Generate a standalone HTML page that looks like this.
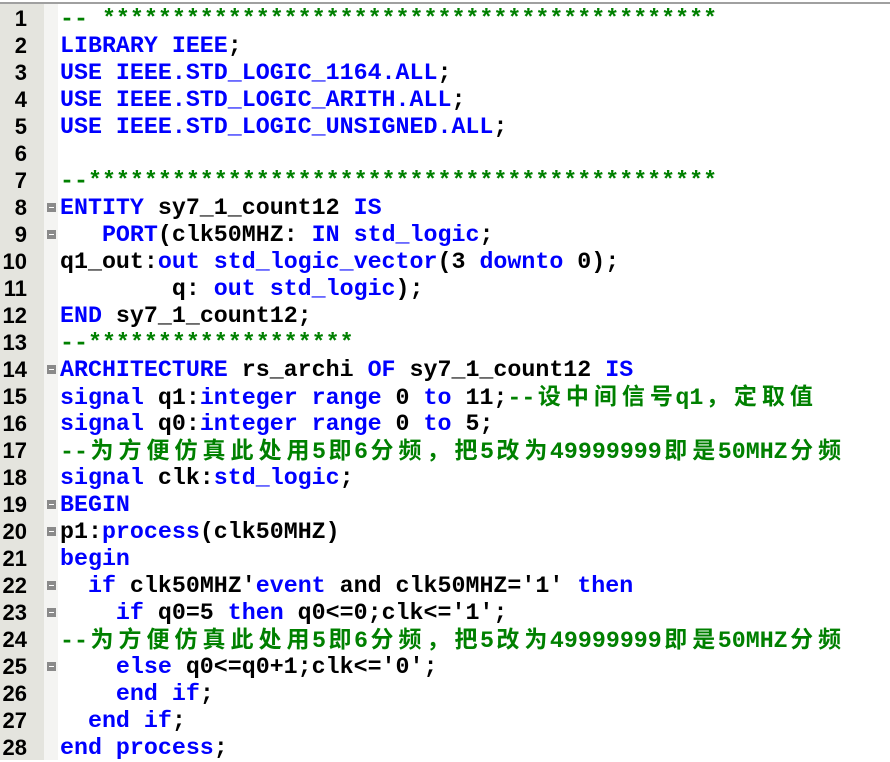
<!DOCTYPE html>
<html><head><meta charset="utf-8"><style>
body{margin:0;width:890px;height:760px;overflow:hidden;background:#fff;position:relative}
.top{position:absolute;left:0;top:2px;width:890px;height:2px;background:#a0a0a0}
.gut{position:absolute;left:0;top:4px;width:44px;height:756px;background:#e4e4de}
.fold{position:absolute;left:44px;top:4px;width:14px;height:756px;background:#f4f4f2}
.ln{position:absolute;left:0;width:27px;text-align:right;font:bold 22px "Liberation Sans",sans-serif;color:#000;height:27px;line-height:27px}
.fm{position:absolute;left:47px;width:9px;height:9px;background:#8a8a8a}
.fm:after{content:"";position:absolute;left:2px;top:4px;width:5px;height:1px;background:#fff}
.code{position:absolute;left:60px;top:6px;font:bold 23.3px "Liberation Mono",monospace;color:#000}
.code div{height:27px;line-height:27px;white-space:pre;overflow:hidden}
.b{color:#0000ff}.g{color:#008000}
.c{display:inline-block;width:28px;line-height:20px;vertical-align:baseline;text-align:center;font-family:"Noto Sans CJK SC",sans-serif;font-size:23px;font-weight:bold}
</style></head><body>
<div class="top"></div><div class="gut"></div><div class="fold"></div>
<div class="ln" style="top:5px">1</div><div class="ln" style="top:32px">2</div><div class="ln" style="top:59px">3</div><div class="ln" style="top:86px">4</div><div class="ln" style="top:113px">5</div><div class="ln" style="top:140px">6</div><div class="ln" style="top:167px">7</div><div class="ln" style="top:194px">8</div><div class="ln" style="top:221px">9</div><div class="ln" style="top:248px">10</div><div class="ln" style="top:275px">11</div><div class="ln" style="top:302px">12</div><div class="ln" style="top:329px">13</div><div class="ln" style="top:356px">14</div><div class="ln" style="top:383px">15</div><div class="ln" style="top:410px">16</div><div class="ln" style="top:437px">17</div><div class="ln" style="top:464px">18</div><div class="ln" style="top:491px">19</div><div class="ln" style="top:518px">20</div><div class="ln" style="top:545px">21</div><div class="ln" style="top:572px">22</div><div class="ln" style="top:599px">23</div><div class="ln" style="top:626px">24</div><div class="ln" style="top:653px">25</div><div class="ln" style="top:680px">26</div><div class="ln" style="top:707px">27</div><div class="ln" style="top:734px">28</div>
<div class="fm" style="top:203px"></div><div class="fm" style="top:230px"></div><div class="fm" style="top:365px"></div><div class="fm" style="top:500px"></div><div class="fm" style="top:527px"></div><div class="fm" style="top:581px"></div><div class="fm" style="top:608px"></div><div class="fm" style="top:662px"></div>
<div class="code"><div class="g">-- ********************************************</div><div><span class="b">LIBRARY IEEE</span>;</div><div><span class="b">USE IEEE.STD_LOGIC_1164.ALL</span>;</div><div><span class="b">USE IEEE.STD_LOGIC_ARITH.ALL</span>;</div><div><span class="b">USE IEEE.STD_LOGIC_UNSIGNED.ALL</span>;</div><div> </div><div class="g">--*********************************************</div><div><span class="b">ENTITY</span> sy7_1_count12 <span class="b">IS</span></div><div>   <span class="b">PORT</span>(clk50MHZ: <span class="b">IN std_logic</span>;</div><div>q1_out:<span class="b">out std_logic_vector</span>(3 <span class="b">downto</span> 0);</div><div>        q: <span class="b">out std_logic</span>);</div><div><span class="b">END</span> sy7_1_count12;</div><div class="g">--*******************</div><div><span class="b">ARCHITECTURE</span> rs_archi <span class="b">OF</span> sy7_1_count12 <span class="b">IS</span></div><div><span class="b">signal</span> q1:<span class="b">integer range</span> 0 <span class="b">to</span> 11;<span class="g">--<span class="c">设</span><span class="c">中</span><span class="c">间</span><span class="c">信</span><span class="c">号</span>q1<span class="c">，</span><span class="c">定</span><span class="c">取</span><span class="c">值</span></span></div><div><span class="b">signal</span> q0:<span class="b">integer range</span> 0 <span class="b">to</span> 5;</div><div class="g">--<span class="c">为</span><span class="c">方</span><span class="c">便</span><span class="c">仿</span><span class="c">真</span><span class="c">此</span><span class="c">处</span><span class="c">用</span>5<span class="c">即</span>6<span class="c">分</span><span class="c">频</span><span class="c">，</span><span class="c">把</span>5<span class="c">改</span><span class="c">为</span>49999999<span class="c">即</span><span class="c">是</span>50MHZ<span class="c">分</span><span class="c">频</span></div><div><span class="b">signal</span> clk:<span class="b">std_logic</span>;</div><div><span class="b">BEGIN</span></div><div>p1:<span class="b">process</span>(clk50MHZ)</div><div><span class="b">begin</span></div><div>  <span class="b">if</span> clk50MHZ'<span class="b">event</span> and clk50MHZ='1' <span class="b">then</span></div><div>    <span class="b">if</span> q0=5 <span class="b">then</span> q0&lt;=0;clk&lt;='1';</div><div class="g">--<span class="c">为</span><span class="c">方</span><span class="c">便</span><span class="c">仿</span><span class="c">真</span><span class="c">此</span><span class="c">处</span><span class="c">用</span>5<span class="c">即</span>6<span class="c">分</span><span class="c">频</span><span class="c">，</span><span class="c">把</span>5<span class="c">改</span><span class="c">为</span>49999999<span class="c">即</span><span class="c">是</span>50MHZ<span class="c">分</span><span class="c">频</span></div><div>    <span class="b">else</span> q0&lt;=q0+1;clk&lt;='0';</div><div>    <span class="b">end if</span>;</div><div>  <span class="b">end if</span>;</div><div><span class="b">end process</span>;</div></div>
</body></html>
